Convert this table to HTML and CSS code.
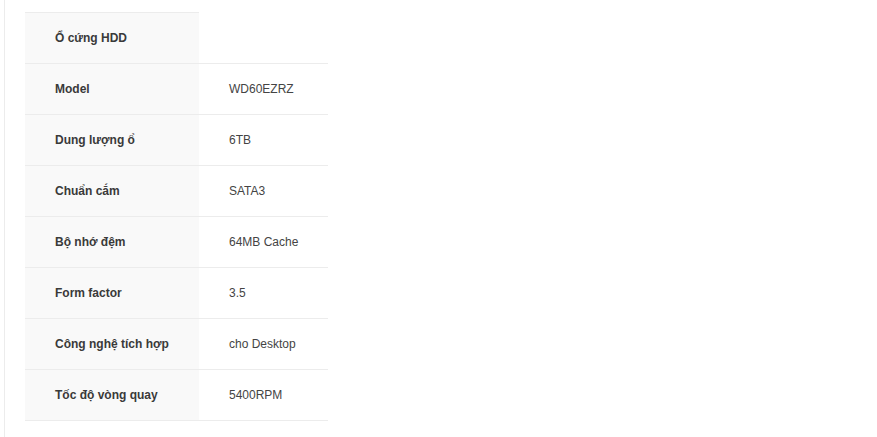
FILE: index.html
```html
<!DOCTYPE html>
<html lang="vi">
<head>
<meta charset="utf-8">
<link rel="stylesheet" href="styles.css">
</head>
<body>
<div class="page">
  <div class="specs">
    <div class="row">
      <div class="label">Ổ cứng HDD</div>
    </div>
    <div class="row">
      <div class="label">Model</div>
      <div class="value">WD60EZRZ</div>
    </div>
    <div class="row">
      <div class="label">Dung lượng ổ</div>
      <div class="value">6TB</div>
    </div>
    <div class="row">
      <div class="label">Chuẩn cắm</div>
      <div class="value">SATA3</div>
    </div>
    <div class="row">
      <div class="label">Bộ nhớ đệm</div>
      <div class="value">64MB Cache</div>
    </div>
    <div class="row">
      <div class="label">Form factor</div>
      <div class="value">3.5</div>
    </div>
    <div class="row">
      <div class="label">Công nghệ tích hợp</div>
      <div class="value">cho Desktop</div>
    </div>
    <div class="row last">
      <div class="label">Tốc độ vòng quay</div>
      <div class="value">5400RPM</div>
    </div>
  </div>
</div>
</body>
</html>
```
FILE: styles.css
```css
html, body {
  margin: 0;
  padding: 0;
  background: #fff;
}
body {
  font-family: "Liberation Sans", Arial, sans-serif;
  font-size: 12px;
  color: #333;
}
.page {
  margin-left: 4px;
  border-left: 1px solid #ececec;
  min-height: 437px;
  box-sizing: border-box;
  padding: 12px 0 0 20px;
}
.specs {
  display: flex;
  flex-direction: column;
  width: 303px;
}
.row {
  display: flex;
}
.label, .value {
  height: 50px;
  line-height: 50px;
  border-top: 1px solid #ececec;
  padding-left: 30px;
  box-sizing: content-box;
  white-space: nowrap;
}
.label {
  width: 144px;
  background: #f9f9f9;
  font-weight: bold;
  color: #3a3a3a;
}
.value {
  width: 99px;
  color: #444;
}
.last .label, .last .value {
  border-bottom: 1px solid #ececec;
}
```
